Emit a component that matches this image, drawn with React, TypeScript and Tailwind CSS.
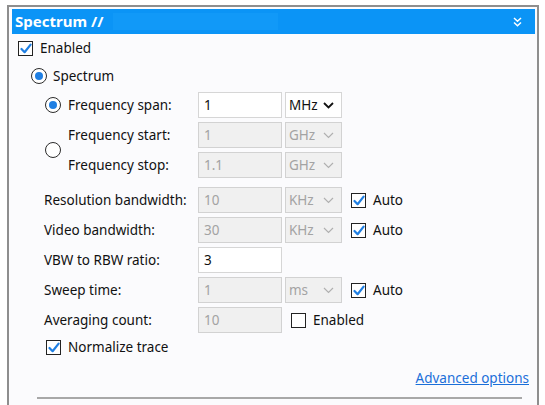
import type { ReactNode } from 'react'

const FONT = "font-['Noto_Sans',sans-serif]"

function Check({ checked }: { checked: boolean }) {
  return (
    <span className="flex h-[15px] w-[15px] shrink-0 items-center justify-center border-[1.5px] border-[#222] bg-white">
      {checked && (
        <svg width="12" height="11" viewBox="0 0 12 11">
          <path d="M1.5 6 L4.6 9.2 L10.6 1.6" fill="none" stroke="#1f7fe3" strokeWidth="2.2" strokeLinecap="round" strokeLinejoin="round" />
        </svg>
      )}
    </span>
  )
}

function Radio({ checked }: { checked: boolean }) {
  return (
    <span className="flex h-[16px] w-[16px] shrink-0 items-center justify-center rounded-full border-[1.5px] border-[#2b2b2b] bg-white">
      {checked && <span className="h-[8px] w-[8px] rounded-full bg-[#1f7fe3]" />}
    </span>
  )
}

function TextBox({ value, disabled }: { value: string; disabled?: boolean }) {
  return (
    <div
      className={`flex h-[26px] w-[84px] shrink-0 items-center border px-[5px] ${
        disabled ? 'border-[#d2d2d2] bg-[#f0f0f0] text-[#a3a3a3]' : 'border-[#d6d6d6] bg-white text-[#111]'
      }`}
    >
      {value}
    </div>
  )
}

function Dropdown({ value, disabled }: { value: string; disabled?: boolean }) {
  return (
    <div
      className={`ml-[3px] flex h-[26px] w-[57px] shrink-0 items-center justify-between border pl-[3px] pr-[7px] ${
        disabled ? 'border-[#d2d2d2] bg-[#f0f0f0] text-[#a3a3a3]' : 'border-[#d6d6d6] bg-white text-[#111]'
      }`}
    >
      <span>{value}</span>
      <svg width="11" height="7" viewBox="0 0 11 7">
        <path d="M1 1 L5.5 5.5 L10 1" fill="none" stroke={disabled ? '#b0b0b0' : '#111'} strokeWidth={disabled ? 1.2 : 1.8} />
      </svg>
    </div>
  )
}

function Auto({ label = 'Auto', checked = true }: { label?: string; checked?: boolean }) {
  return (
    <div className="ml-[9px] flex items-center gap-[7px]">
      <Check checked={checked} />
      <span>{label}</span>
    </div>
  )
}

function Field({ label, children }: { label: string; children: ReactNode }) {
  return (
    <div className="ml-[26px] flex h-[30px] items-center">
      <span className="w-[154px] shrink-0">{label}</span>
      {children}
    </div>
  )
}

export default function App() {
  return (
    <div className={`h-[405px] w-[545px] overflow-hidden bg-white pl-[7px] pt-[5px] text-[13.5px] text-[#111] ${FONT}`}>
      <div className="h-[400px] w-[532px] border-2 border-b-0 border-[#8e8e8e] bg-[#fbfbfd] pt-[2px]">
        <div className="ml-[3px] mr-[2px] flex h-[25px] items-center bg-[#0b94f6] pl-[3px] pr-[13px]">
          <span className="text-[15px] font-bold text-white">Spectrum //</span>
          <span className="ml-[10px] h-[17px] w-[165px] bg-[#1199f8]" />
          <svg className="ml-auto" width="9" height="10" viewBox="0 0 9 10">
            <path d="M1 1 L4.5 4.3 L8 1 M1 5.5 L4.5 8.8 L8 5.5" fill="none" stroke="white" strokeWidth="1.5" />
          </svg>
        </div>

        <div className="flex flex-col pl-[9px] pr-[8px]">
          <div className="flex h-[28px] items-center gap-[7px]">
            <Check checked />
            <span>Enabled</span>
          </div>

          <div className="ml-[13px] flex h-[28px] items-center gap-[6px]">
            <Radio checked />
            <span>Spectrum</span>
          </div>

          <div className="ml-[27px] flex">
            <div className="flex w-[23px] flex-col">
              <div className="flex h-[30px] items-center">
                <Radio checked />
              </div>
              <div className="flex h-[60px] items-center">
                <Radio checked={false} />
              </div>
            </div>
            <div className="flex flex-col">
              <div className="flex h-[30px] items-center">
                <span className="w-[130px]">Frequency span:</span>
                <TextBox value="1" />
                <Dropdown value="MHz" />
              </div>
              <div className="flex h-[30px] items-center">
                <span className="w-[130px]">Frequency start:</span>
                <TextBox value="1" disabled />
                <Dropdown value="GHz" disabled />
              </div>
              <div className="flex h-[30px] items-center">
                <span className="w-[130px]">Frequency stop:</span>
                <TextBox value="1.1" disabled />
                <Dropdown value="GHz" disabled />
              </div>
            </div>
          </div>

          <div className="h-[5px]" />

          <Field label="Resolution bandwidth:">
            <TextBox value="10" disabled />
            <Dropdown value="KHz" disabled />
            <Auto />
          </Field>
          <Field label="Video bandwidth:">
            <TextBox value="30" disabled />
            <Dropdown value="KHz" disabled />
            <Auto />
          </Field>
          <Field label="VBW to RBW ratio:">
            <TextBox value="3" />
          </Field>
          <Field label="Sweep time:">
            <TextBox value="1" disabled />
            <Dropdown value="ms" disabled />
            <Auto />
          </Field>
          <Field label="Averaging count:">
            <TextBox value="10" disabled />
            <Auto label="Enabled" checked={false} />
          </Field>

          <div className="ml-[28px] flex h-[25px] items-center gap-[7px]">
            <Check checked />
            <span>Normalize trace</span>
          </div>

          <div className="flex h-[37px] items-center justify-end">
            <a className="text-[#1b6fd9] underline" href="#">
              Advanced options
            </a>
          </div>

          <div className="ml-[19px] h-[2px] w-[485px] bg-[#a8a8a8]" />
        </div>
      </div>
    </div>
  )
}
